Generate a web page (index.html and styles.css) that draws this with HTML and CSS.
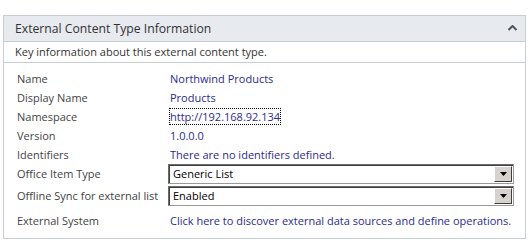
FILE: index.html
```html
<!DOCTYPE html>
<html>
<head>
<meta charset="utf-8">
<link rel="stylesheet" href="styles.css">
</head>
<body>
<div class="panel">
  <div class="head">
    <span class="title">External Content Type Information</span>
    <svg class="chev" width="9" height="6" viewBox="0 0 9 6"><path d="M0.5 5 L4.5 1 L8.5 5" fill="none" stroke="#555" stroke-width="2"/></svg>
  </div>
  <div class="desc">Key information about this external content type.</div>
  <div class="grid">
    <div class="lbl">Name</div><div class="val">Northwind Products</div>
    <div class="lbl">Display Name</div><div class="val">Products</div>
    <div class="lbl">Namespace</div><div class="val"><span class="focus">http://192.168.92.134</span></div>
    <div class="lbl">Version</div><div class="val">1.0.0.0</div>
    <div class="lbl">Identifiers</div><div class="val">There are no identifiers defined.</div>
    <div class="lbl lsel">Office Item Type</div>
    <div class="sel"><span class="seltext">Generic List</span><span class="btn"><svg width="7" height="4" viewBox="0 0 7 4"><path d="M0 0H7L3.5 4Z" fill="#000"/></svg></span></div>
    <div class="lbl lsel">Offline Sync for external list</div>
    <div class="sel"><span class="seltext">Enabled</span><span class="btn"><svg width="7" height="4" viewBox="0 0 7 4"><path d="M0 0H7L3.5 4Z" fill="#000"/></svg></span></div>
    <div class="lbl last">External System</div><div class="val last wide">Click here to discover external data sources and define operations.</div>
  </div>
</div>
</body>
</html>
```
FILE: styles.css
```css
html, body { margin: 0; padding: 0; background: #fff; }
body { font-family: "Open Sans", "DejaVu Sans", sans-serif; font-size: 11px; color: #444; }
.panel {
  margin: 15px 0 0 3px;
  width: 521px;
  height: 222px;
  border: 1px solid #c8cdd3;
}
.head {
  height: 25px;
  background: #e7eaef;
  border-bottom: 1px solid #c8cdd3;
  display: flex;
  align-items: center;
  justify-content: space-between;
  padding: 0 8px 0 11px;
}
.title { font-size: 12.2px; color: #333; }
.chev { margin-top: -1px; }
.desc {
  height: 20px;
  line-height: 20px;
  padding-left: 11px;
  border-bottom: 1px solid #c8cdd3;
  color: #333;
}
.grid {
  display: grid;
  grid-template-columns: 151px 346px;
  padding: 6px 0 0 13px;
}
.lbl, .val { height: 19px; line-height: 19px; }
.val { color: #2b2b8f; padding-left: 2px; }
.wide { white-space: nowrap; }
.focus { outline: 1px dotted #000; outline-offset: 0; }
.lsel { height: 22px; line-height: 20px; }
.sel {
  height: 18px;
  margin-bottom: 2px;
  border: 1px solid #6b6b6b;
  border-right-color: #9a9a9a;
  border-bottom-color: #9a9a9a;
  box-shadow: inset 1px 1px 0 #404040;
  display: flex;
  align-items: stretch;
  justify-content: space-between;
  color: #000;
  font-size: 11px;
}
.seltext { padding-left: 4px; line-height: 18px; }
.btn {
  width: 16px;
  margin: 1px 1px 1px 0;
  background: #d6d3ce;
  border: 1px solid;
  border-color: #fff #404040 #404040 #fff;
  display: flex;
  align-items: center;
  justify-content: center;
}
.last { line-height: 26px; height: 26px; }
```
